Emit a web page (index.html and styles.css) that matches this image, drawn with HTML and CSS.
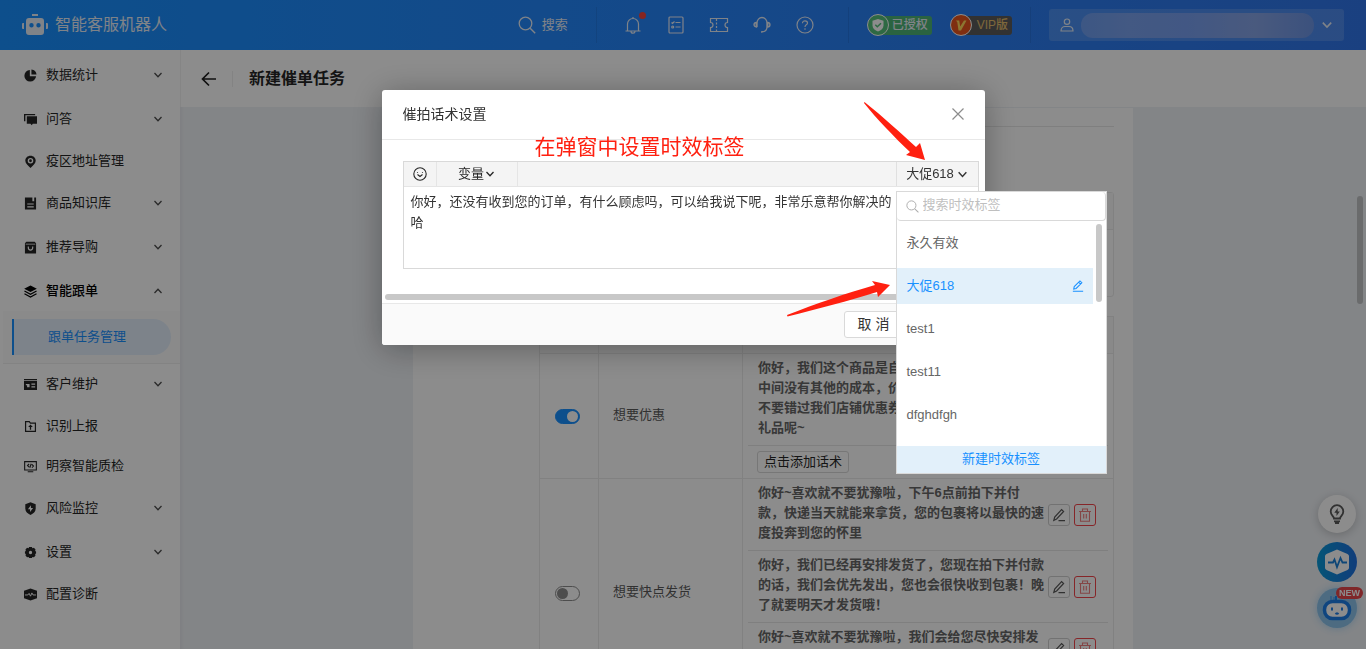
FILE: index.html
```html
<!DOCTYPE html>
<html lang="zh-CN">
<head>
<meta charset="utf-8">
<title>智能客服机器人</title>
<link rel="stylesheet" href="styles.css">
</head>
<body>
<svg class="sprite" aria-hidden="true">
  <symbol id="chevron" viewBox="0 0 10 10"><path d="M1.500 3l3.500 3.700L8.500 3" fill="none" stroke="currentColor" stroke-width="1.300"/></symbol>
  <symbol id="search" viewBox="0 0 18 18"><circle cx="7.500" cy="7.500" r="6.300" fill="none" stroke="currentColor" stroke-width="1.300"/><path d="M12.200 12.200l5 5" stroke="currentColor" stroke-width="1.400"/></symbol>
  <symbol id="pencil" viewBox="0 0 14 14"><path d="M2 10.500l.6-2.800L9.300 1l2.200 2.200-6.700 6.700zM7.800 2.600l2.200 2.200M1 13h12" fill="none" stroke="currentColor" stroke-width="1.200"/></symbol>
  <symbol id="pen" viewBox="0 0 14 14"><path d="M1.800 12.300l.9-3.300L9.600 1.600l2 1.900-7 7.500zM6.500 12.600H13" fill="none" stroke="currentColor" stroke-width="1.200"/></symbol>
  <symbol id="trash" viewBox="0 0 14 14"><path d="M1 3.500h12M4.500 3.500V1h5v2.500M2.500 3.500v9.700h9V3.500M5.700 6v4.500M8.300 6v4.500" fill="none" stroke="currentColor" stroke-width="1.100"/></symbol>
</svg>

<div class="app">
  <header class="topbar">
    <div class="brand">
      <svg width="26" height="22" viewBox="0 0 26 22" fill="currentColor"><path d="M10 0h6v2h-6zM1 9h1v6H1a1 1 0 0 1-1-1v-4a1 1 0 0 1 1-1zM24 9h1a1 1 0 0 1 1 1v4a1 1 0 0 1-1 1h-1z"/><path fill-rule="evenodd" d="M7 4h12a3 3 0 0 1 3 3v11a3 3 0 0 1-3 3H7a3 3 0 0 1-3-3V7a3 3 0 0 1 3-3zm2.500 5a2.200 2.200 0 1 0 0 4.400 2.200 2.200 0 0 0 0-4.400zm7 0a2.200 2.200 0 1 0 0 4.400 2.200 2.200 0 0 0 0-4.400z"/></svg>
      <span>智能客服机器人</span>
    </div>
    <button class="top-search"><svg width="18" height="18"><use href="#search"/></svg>搜索</button>
    <div class="top-icons">
      <button class="icon-btn" aria-label="通知"><svg width="18" height="18" viewBox="0 0 18 18" fill="none" stroke="currentColor" stroke-width="1.200"><path d="M1.500 15h15M3.500 15V8a5.500 5.500 0 0 1 11 0v7M9 2.500V1M7 15.500a2 1.700 0 0 0 4 0"/></svg><i class="dot"></i></button>
      <button class="icon-btn" aria-label="任务"><svg width="18" height="18" viewBox="0 0 18 18" fill="none" stroke="currentColor" stroke-width="1.200"><rect x="2" y="1" width="14" height="16" rx="1"/><path d="M4.500 6.500l1 1 2-2M8.500 6.500h5M8.500 11h5"/><circle cx="5.700" cy="11" r="1"/></svg></button>
      <button class="icon-btn" aria-label="卡券"><svg width="20" height="18" viewBox="0 0 20 18" fill="none" stroke="currentColor" stroke-width="1.200"><path d="M1.500 2.500h17v4a2.500 2.500 0 0 0 0 5v4h-17v-4a2.500 2.500 0 0 0 0-5z"/><path d="M7.500 3v12" stroke-dasharray="2 1.500"/></svg></button>
      <button class="icon-btn" aria-label="客服"><svg width="18" height="18" viewBox="0 0 18 18" fill="none" stroke="currentColor" stroke-width="1.300"><path d="M4 11V7a5 5.500 0 0 1 10 0v4c0 3-2 5-6 5"/><path d="M3.500 6.500v4.500C2 11 1 10 1 8.800s1-2.300 2.500-2.300zM14.500 6.500v4.500C16 11 17 10 17 8.800s-1-2.300-2.500-2.300z" fill="currentColor" fill-opacity=".4"/></svg></button>
      <button class="icon-btn" aria-label="帮助"><svg width="18" height="18" viewBox="0 0 18 18" fill="none" stroke="currentColor" stroke-width="1.200"><circle cx="9" cy="9" r="8"/><path d="M6.500 7.200c0-3.300 5-3 5-.2C11.500 9 9 8.700 9 11M9 12.300v1.400"/></svg></button>
    </div>
    <div class="badges">
      <span class="badge badge-auth"><i class="badge-icon"><svg width="14" height="14" viewBox="0 0 14 14"><path d="M7 1l5.500 1.800v4.700C12.500 10.500 10 12.500 7 13.500 4 12.500 1.500 10.500 1.500 7.500V2.800z" fill="#fff"/><path d="M4.300 6.800l2 2L10 5.200" fill="none" stroke="#55c07a" stroke-width="1.500"/></svg></i>已授权</span>
      <span class="badge badge-vip"><i class="badge-icon"><svg width="14" height="14" viewBox="0 0 14 14"><path d="M2 2.500h3.200l1 6L10 2.500h2.500L7 12.500H4.500L3.300 4.200z" fill="#ffd75a"/></svg></i>VIP版</span>
    </div>
    <button class="account" aria-label="账户"><svg width="14" height="14" viewBox="0 0 14 14" fill="none" stroke="currentColor" stroke-width="1.200"><circle cx="7" cy="3.700" r="2.700"/><path d="M1 13c0-3 2-4.500 4-4.500h4c2 0 4 1.500 4 4.500z"/></svg><span class="account-name"></span><svg width="12" height="12"><use href="#chevron"/></svg></button>
  </header>

  <div class="main">
    <nav class="sidebar">
      <a class="nav-item group" href="#"><svg viewBox="0 0 14 14"><path d="M6.300 1v6.700H13A6.300 6.300 0 1 1 6.300 1zM8 0.500A6.200 6.200 0 0 1 13.500 6H8z"/></svg>数据统计<svg class="chev"><use href="#chevron"/></svg></a>
      <a class="nav-item group" href="#"><svg viewBox="0 0 14 14"><path d="M0 1h12v1.500H1.500V9H0zM3 3.500h11v8H9.500l-1.200 1.700L7 11.500H3z"/></svg>问答<svg class="chev"><use href="#chevron"/></svg></a>
      <a class="nav-item" href="#"><svg viewBox="0 0 14 14"><path fill-rule="evenodd" d="M7 .8c3.300 0 5.600 2.400 5.600 5.400C12.600 9.200 9.500 11.500 7 14 4.500 11.500 1.400 9.200 1.400 6.200 1.400 3.200 3.700.8 7 .8zm0 2.400a3 3 0 1 0 0 6 3 3 0 0 0 0-6zm0 1.500a1.500 1.500 0 1 1 0 3 1.500 1.500 0 0 1 0-3z"/></svg>疫区地址管理</a>
      <a class="nav-item group" href="#"><svg viewBox="0 0 14 14"><path fill-rule="evenodd" d="M1 .5h8v4h2v-4h2v13H1zM3.500 7v1.200h7V7zm0 3v1.200h7V10z"/></svg>商品知识库<svg class="chev"><use href="#chevron"/></svg></a>
      <a class="nav-item group" href="#"><svg viewBox="0 0 14 14"><path fill-rule="evenodd" d="M2.500.7h9L13 2.500v11H1v-11zM1.800 3v.8h10.400V3zM4 6v1.300c0 4.300 6 4.300 6 0V6H8.700v1.300c0 2.400-3.400 2.400-3.400 0V6z"/></svg>推荐导购<svg class="chev"><use href="#chevron"/></svg></a>
      <a class="nav-item group open" href="#"><svg viewBox="0 0 14 14"><path d="M7 .5L13.800 4 7 7.500.2 4z"/><path d="M.5 6.500L7 10l6.500-3.500M.5 9.500L7 13l6.500-3.500" fill="none" stroke="currentColor" stroke-width="1.300"/></svg>智能跟单<svg class="chev"><use href="#chevron"/></svg></a>
      <div class="submenu"><a class="sub-item" href="#">跟单任务管理</a></div>
      <a class="nav-item group" href="#"><svg viewBox="0 0 14 14"><path fill-rule="evenodd" d="M0 1h14v1.200H0zM0 3h14v10H0zm2 3.500v1.200h1.300V10H6V6.500zM8 6v1.200h4V6zm0 3v1.200h4V9z"/></svg>客户维护<svg class="chev"><use href="#chevron"/></svg></a>
      <a class="nav-item" href="#"><svg viewBox="0 0 14 14" ><path d="M1.700 1.800h4l1.200 1.500h5.400v9H1.700z" fill="none" stroke="currentColor" stroke-width="1.300"/><path d="M7 4.800l2.500 2.700H7.700V10.500H6.300V7.500H4.500z"/></svg>识别上报</a>
      <a class="nav-item" href="#"><svg viewBox="0 0 14 14"><path d="M.7 1.700h12.600v9H.7zM4 12.700h6M5.500 4.300L3.800 6l1.700 1.700M8.500 8.200L10.200 6.500 8.500 4.700M7.800 4L6.200 8.300" fill="none" stroke="currentColor" stroke-width="1.200"/></svg>明察智能质检</a>
      <a class="nav-item group" href="#"><svg viewBox="0 0 14 14"><path fill-rule="evenodd" d="M7 .3l5.600 2V7c0 3.500-2.500 5.500-5.600 7-3.100-1.500-5.600-3.500-5.600-7V2.300zM7.500 3.500L4.200 7.700h2.300v3.100l3.300-4.300H7.500z"/></svg>风险监控<svg class="chev"><use href="#chevron"/></svg></a>
      <a class="nav-item group" href="#"><svg viewBox="0 0 14 14"><path fill-rule="evenodd" d="M5.500 1h3l.6 1.300 1.600-.4 1.700 2-.4 1.500L13 6v2l-1 .7.4 1.500-1.700 2-1.600-.4L8.500 13h-3l-.6-1.200-1.600.4-1.700-2L2 8.700 1 8V6l1-.6-.4-1.500 1.700-2 1.600.4zM7 5.200a1.800 1.800 0 1 0 0 3.600 1.800 1.800 0 0 0 0-3.600z"/></svg>设置<svg class="chev"><use href="#chevron"/></svg></a>
      <a class="nav-item" href="#"><svg viewBox="0 0 14 14"><path d="M7 0.500L14 3v8L7 13.500 0 11V3z"/><path d="M1 7.500h3.200L5.500 5.800 7 8.800l1.500-3.500 1.200 2.200H13" fill="none" stroke="#fff" stroke-width="1"/></svg>配置诊断</a>
    </nav>

    <main class="content">
      <div class="page-head">
        <button class="back" aria-label="返回"><svg width="16" height="16" viewBox="0 0 16 16" fill="none" stroke="currentColor" stroke-width="1.700"><path d="M8 1.500L1.500 8 8 14.500M1.500 8H15"/></svg></button>
        <h1>新建催单任务</h1>
      </div>
      <div class="sheet">
        <div class="section-line"></div>
        <div class="card-box"><div class="card-head"></div></div>
        <table class="rules">
          <thead><tr><th class="c-switch"></th><th class="c-name"></th><th></th></tr></thead>
          <tbody>
            <tr>
              <td class="c-switch"><input id="sw1" class="switch" type="checkbox" checked></td>
              <td class="c-name"><label for="sw1">想要优惠</label></td>
              <td class="c-talk">
                <div class="talk"><p>你好，我们这个商品是自<br>中间没有其他的成本，价<br>不要错过我们店铺优惠券<br>礼品呢~</p></div>
                <div class="talk-add"><button class="add-btn">点击添加话术</button></div>
              </td>
            </tr>
            <tr>
              <td class="c-switch"><input id="sw2" class="switch" type="checkbox"></td>
              <td class="c-name"><label for="sw2">想要快点发货</label></td>
              <td class="c-talk">
                <div class="talk"><p>你好~喜欢就不要犹豫啦，下午6点前拍下并付<br>款，快递当天就能来拿货，您的包裹将以最快的速<br>度投奔到您的怀里</p>
                  <div class="acts"><button class="act" aria-label="编辑"><svg width="14" height="14"><use href="#pen"/></svg></button><button class="act act-del" aria-label="删除"><svg width="14" height="14"><use href="#trash"/></svg></button></div></div>
                <div class="talk"><p>你好，我们已经再安排发货了，您现在拍下并付款<br>的话，我们会优先发出，您也会很快收到包裹！晚<br>了就要明天才发货哦！</p>
                  <div class="acts"><button class="act" aria-label="编辑"><svg width="14" height="14"><use href="#pen"/></svg></button><button class="act act-del" aria-label="删除"><svg width="14" height="14"><use href="#trash"/></svg></button></div></div>
                <div class="talk talk-short"><p>你好~喜欢就不要犹豫啦，我们会给您尽快安排发</p>
                  <div class="acts"><button class="act" aria-label="编辑"><svg width="14" height="14"><use href="#pen"/></svg></button><button class="act act-del" aria-label="删除"><svg width="14" height="14"><use href="#trash"/></svg></button></div></div>
                <div class="talk-add"></div>
              </td>
            </tr>
          </tbody>
        </table>
      </div>
      <div class="page-thumb"></div>
    </main>
  </div>

  <div class="floats">
    <button class="float float-tip" aria-label="提示"><svg width="18" height="20" viewBox="0 0 18 20"><path d="M6 14.500c0-2-3.300-3.200-3.300-7a6.300 6.300 0 0 1 12.600 0c0 3.800-3.300 5-3.300 7zM6 17.300h6M7 19h4" fill="none" stroke="#595959" stroke-width="1.800"/><path d="M9.700 4L6.300 8.700h2.200V12l3.300-4.500H9.700z" fill="#595959"/></svg></button>
    <button class="float float-diag" aria-label="诊断"><svg width="26" height="26" viewBox="0 0 26 26"><path d="M13 .5L23.500 5q1.500.8 1.500 2v12q0 1.200-1.500 2L13 25.500 2.500 21Q1 20.200 1 19V7q0-1.200 1.500-2z" fill="#fff"/><path d="M4 13.500h5l1.500-3L13 18l3.500-9 2 4.500H23" fill="none" stroke="#1a80d8" stroke-width="1.800"/></svg></button>
    <button class="float float-bot" aria-label="机器人"><svg width="30" height="28" viewBox="0 0 30 28"><path d="M14 6V2" stroke="#1d86ee" stroke-width="2"/><path d="M9 2v5M12 3v3" stroke="#4fa3f2" stroke-width="1.500"/><rect x="2.500" y="7.500" width="25" height="17" rx="8" fill="#fff" stroke="#1d7ee8" stroke-width="3.500"/><path d="M10 13.500v3M20 13.500v3M13.500 19q1.500 1.500 3 0" stroke="#1d7ee8" stroke-width="2" fill="none"/></svg><span class="new">NEW</span></button>
  </div>
</div>

<div class="mask">
  <section class="dialog" role="dialog" aria-labelledby="dlg-title">
    <div class="dialog-head"><h2 id="dlg-title">催拍话术设置</h2><button class="close" aria-label="关闭"><svg width="12" height="12" viewBox="0 0 12 12" stroke="currentColor" stroke-width="1.200"><path d="M.5.5l11 11M11.500.5l-11 11"/></svg></button></div>
    <div class="dialog-body">
      <div class="editor">
        <div class="toolbar">
          <button class="tool tool-face" aria-label="表情"><svg width="14" height="14" viewBox="0 0 14 14" fill="none" stroke="currentColor" stroke-width="1.100"><circle cx="7" cy="7" r="6.200"/><path d="M4.500 7.500l2.500 2 2.500-2M4.500 5v.8M9.500 5v.8"/></svg></button>
          <button class="tool tool-var">变量<svg width="10" height="10"><use href="#chevron"/></svg></button>
          <div class="tag-picker">
            <button class="tool tool-tag">大促618<svg width="11" height="11"><use href="#chevron"/></svg></button>
            <div class="dropdown">
              <label class="tag-search"><svg width="13" height="13"><use href="#search"/></svg><input type="text" placeholder="搜索时效标签" aria-label="搜索时效标签"></label>
              <ul class="tags">
                <li>永久有效</li>
                <li class="on">大促618<button class="tag-edit" aria-label="编辑标签"><svg width="12" height="12"><use href="#pencil"/></svg></button></li>
                <li>test1</li>
                <li>test11</li>
                <li>dfghdfgh</li>
              </ul>
              <div class="tags-thumb"></div>
              <button class="tag-new">新建时效标签</button>
            </div>
          </div>
        </div>
        <textarea class="message" aria-label="话术内容">你好，还没有收到您的订单，有什么顾虑吗，可以给我说下呢，非常乐意帮你解决的
哈</textarea>
      </div>
    </div>
    <div class="body-thumb"></div>
    <div class="dialog-foot"><button class="cancel">取 消</button></div>
    <p class="note">在弹窗中设置时效标签</p>
    <svg class="arrow arrow-top" width="62" height="60" viewBox="0 0 62 60"><path d="M.5 0C18 14 38 32 52 45l4-4 5 17-19-5 4-3C30 35 12 16 0 1z"/></svg>
    <svg class="arrow arrow-low" width="104" height="36" viewBox="0 0 104 36"><path d="M0 34C28 23 60 12 88 4l-3-4 18 4-12 12-1-5C62 20 30 28 .5 35.500z"/></svg>
  </section>
</div>
</body>
</html>
```
FILE: styles.css
```css
* { box-sizing: border-box; }
body {
  margin: 0;
  overflow: hidden;
  font: 13px/20px "Liberation Sans", "Noto Sans CJK SC", sans-serif;
  color: #595959;
}
button { font: inherit; color: inherit; padding: 0; border: 0; background: none; display: flex; align-items: center; justify-content: center; }
a { color: inherit; text-decoration: none; }
h1, h2, p, ul { margin: 0; padding: 0; font-weight: normal; }
ul { list-style: none; }
i { font-style: normal; }
svg { flex: none; display: block; }
.sprite { position: absolute; width: 0; height: 0; }

.app { height: 100vh; display: flex; flex-direction: column; }

/* top bar */
.topbar {
  flex: none;
  height: 50px;
  padding: 0 22px;
  display: flex;
  align-items: center;
  color: #e8eef8;
  background: linear-gradient(90deg, #1890ff, #2685fa 50%, #3176ea);
}
.brand { display: flex; align-items: center; gap: 7px; font-size: 16px; margin-right: auto; }
.top-search { gap: 6px; }
.top-icons { display: flex; gap: 23px; margin-left: 28px; padding: 0 33px 0 26px; height: 36px; border: solid rgba(0, 0, 0, .08); border-width: 0 1px; }
.icon-btn { width: 20px; position: relative; }
.dot { position: absolute; top: 5px; right: -3px; width: 7px; height: 7px; border-radius: 50%; background: #f5443c; }
.badges { display: flex; align-items: center; gap: 18px; height: 36px; padding: 0 18px; border-right: 1px solid rgba(0, 0, 0, .08); }
.badge { display: flex; align-items: center; gap: 3px; height: 19px; padding-right: 4px; border-radius: 3px; font-size: 12px; font-weight: 500; }
.badge-icon { width: 22px; height: 22px; border: 1px solid #fff; border-radius: 50%; display: flex; align-items: center; justify-content: center; }
.badge-auth { background: linear-gradient(90deg, transparent 10px, #4db577 10px); }
.badge-auth .badge-icon { background: #55c07a; }
.badge-vip { gap: 5px; color: #e3bd6c; background: linear-gradient(90deg, transparent 10px, #5c5c5c 10px); }
.badge-vip .badge-icon { background: #e8541e; }
.account { width: 295px; height: 32px; margin-left: 18px; padding: 0 11px; gap: 7px; border-radius: 3px; background: rgba(255, 255, 255, .15); }
.account-name { flex: 1; height: 25px; border-radius: 12px; background: linear-gradient(90deg, #6f9ef0, #7aa2ee 20%, #789ff0 45%, #86a4e6 75%, #6c94e4); }

/* side navigation */
.main { flex: 1; min-height: 0; display: flex; }
.sidebar { flex: none; width: 180px; padding-top: 3px; background: #fff; color: #262626; }
.nav-item { display: flex; align-items: center; gap: 9px; height: 40px; padding: 0 17px 0 24px; }
.nav-item.group { height: 44px; }
.nav-item svg { width: 13px; height: 13px; fill: currentColor; }
.nav-item .chev { width: 10px; height: 10px; margin-left: auto; color: #4d4d4d; }
.open { color: #000; font-weight: 500; }
.open .chev { transform: rotate(180deg); }
.submenu { height: 53px; margin: -2px 0 -2px 3px; padding: 8px 9px; background: #fbfbfb; border-bottom: 1px solid #efefef; }
.sub-item { display: flex; align-items: center; height: 36px; padding-left: 34px; border-left: 2px solid #1890ff; border-radius: 0 18px 18px 0; color: #1890ff; background: #e3effc; }

/* page */
.content { flex: 1; min-width: 0; position: relative; overflow: hidden; background: #eff2f6; box-shadow: inset 4px 0 4px -3px rgba(0, 0, 0, .06); }
.page-head { height: 57px; padding: 0 20px; display: flex; align-items: center; background: #fff; border-left: 1px solid #f3f3f3; color: #1f1f1f; }
.back { height: 16px; }
.back svg { margin-right: 15px; }
.page-head h1 { padding-left: 16px; border-left: 1px solid #eee; font-size: 16px; line-height: 16px; font-weight: 700; color: #262626; }
.sheet { max-width: 720px; margin: 1px auto 0; padding: 18px 19px 0 126px; background: #fff; }
.section-line { height: 1px; background: #e8e8e8; }
.card-box { height: 105px; margin: 65px 0 19px; border: 1px solid #ebebeb; border-radius: 3px; }
.card-head { height: 37px; background: #fafafa; border-bottom: 1px solid #ebebeb; }
.rules { width: 100%; border-collapse: separate; border-spacing: 0; table-layout: fixed; border: solid #ebebeb; border-width: 1px 1px 0; }
.rules th { height: 37px; padding: 0; background: #fafafa; border: solid #ebebeb; border-width: 0 1px 1px 0; }
.rules td { padding: 0; border: solid #ebebeb; border-width: 0 1px 1px 0; }
.rules th:last-child, .rules td:last-child { border-right: 0; }
.rules .c-switch { width: 59px; padding-left: 15px; }
.rules .c-name { width: 144px; padding: 0 0 2px 14px; }
.rules .c-talk { padding: 0 5px; }
.talk { display: flex; align-items: center; gap: 10px; padding: 4px 12px 7px 10px; border-bottom: 1px solid #e8e8e8; }
.talk p { flex: 1; white-space: nowrap; font-weight: 700; color: #666; }
.talk-short { min-height: 52px; }
.talk-short p { align-self: flex-start; }
.talk-add { height: 32px; padding: 5px 9px; }
.add-btn { height: 22px; padding: 0 6px; border: 1px solid #d9d9d9; border-radius: 3px; color: #262626; }
.acts { display: flex; gap: 4px; margin: 3px 0 0 -20px; }
.act { width: 22px; height: 22px; border: 1px solid #d0d0d0; border-radius: 3px; background: #fff; }
.act-del { color: #f08080; border-color: #f5454b; }
.switch { appearance: none; display: block; width: 25px; height: 15px; margin: 0; padding: 1px; border: 1px solid #8c8c8c; border-radius: 8px; background: #fff; }
.switch::before { content: ""; display: block; width: 11px; height: 11px; border-radius: 50%; background: #8c8c8c; }
.switch:checked { border-color: #1890ff; background: #1890ff; }
.switch:checked::before { margin-left: auto; background: #fff; }
.page-thumb { position: absolute; right: 3px; top: 146px; width: 6px; height: 108px; border-radius: 3px; background: #c1c3c5; }

/* floating helpers */
.floats { position: fixed; right: 9px; bottom: 21px; display: flex; flex-direction: column; align-items: center; gap: 6px; }
.float { position: relative; width: 40px; height: 40px; border-radius: 50%; }
.float-tip { width: 38px; height: 38px; margin-bottom: 3px; background: #fff; box-shadow: 0 2px 10px rgba(0, 0, 0, .2); }
.float-diag { background: linear-gradient(90deg, #0a9bd8, #1f6fe0); }
.float-bot { background: #8cc4ec; box-shadow: 0 0 8px #a8d4f4; }
.new { position: absolute; left: 19px; top: -1px; padding: 0 3px; border-radius: 6px; background: #e8474c; color: #fff; font-size: 9px; line-height: 12px; font-weight: 700; }

/* dialog */
.mask { position: fixed; inset: 0; display: flex; align-items: flex-start; justify-content: center; padding-top: 90px; background: rgba(0, 0, 0, .45); }
.dialog { position: relative; width: 603px; max-width: 100%; border-radius: 3px; background: #fff; box-shadow: 0 4px 32px rgba(0, 0, 0, .32); }
.dialog-head { display: flex; align-items: center; justify-content: space-between; height: 50px; padding: 0 21px 2px; border-bottom: 1px solid #e8e8e8; color: #333; }
.dialog-head h2 { font-size: 14px; }
.close { color: #8c8c8c; }
.dialog-body { padding: 21px 6px 25px 21px; }
.editor { border: 1px solid #d9d9d9; }
.toolbar { display: flex; height: 25px; background: #f4f4f4; border-bottom: 1px solid #e5e5e5; color: #262626; }
.tool { height: 24px; gap: 1px; }
.tool-face { width: 33px; border-right: 1px solid #e5e5e5; }
.tool-var { width: 81px; border-right: 1px solid #e5e5e5; }
.tag-picker { position: relative; margin-left: auto; }
.tool-tag { width: 82px; gap: 3px; border-left: 1px solid #e0e0e0; color: #333; }
.message { display: block; width: 100%; height: 81px; padding: 4px 7px; border: 0; resize: none; outline: 0; overflow: hidden; font: inherit; line-height: 21px; color: #333; }
.body-thumb { width: 588px; height: 6px; margin: 0 3px 3px; border-radius: 3px; background: #c8c8c8; }
.dialog-foot { display: flex; justify-content: flex-end; height: 42px; padding: 7px 81px 0; border-top: 1px solid #e8e8e8; border-radius: 0 0 3px 3px; background: #fafafa; color: #333; }
.cancel { height: 27px; padding: 0 13px 2px; border: 1px solid #d9d9d9; border-radius: 3px; background: #fff; font-size: 14px; }

/* label dropdown */
.dropdown { position: absolute; z-index: 1; left: 0; top: 29px; width: 211px; border: 1px solid #d9d9d9; background: #fff; }
.tag-search { display: flex; align-items: center; gap: 4px; height: 29px; padding: 0 9px; border: 1px solid #d9d9d9; border-top-width: 0; border-left-width: 0; border-radius: 4px; color: #aaa; }
.tag-search input { flex: 1; min-width: 0; padding: 0 0 2px; border: 0; outline: 0; background: none; font: inherit; line-height: 20px; }
.tag-search input::placeholder { color: #bfbfbf; }
.tags { display: flex; flex-direction: column; gap: 7px; padding: 4px 13px 13px 0; color: #666; }
.tags li { display: flex; align-items: center; justify-content: space-between; height: 36px; padding: 0 9px 0 10px; }
.tags .on { background: #e2f0fa; color: #1890ff; }
.tags-thumb { position: absolute; right: 4px; top: 32px; width: 6px; height: 78px; border-radius: 3px; background: #c8c8c8; }
.tag-new { width: 100%; height: 27px; padding-bottom: 2px; background: #e2f0fa; color: #1890ff; }

/* annotations over the dialog */
.note { position: absolute; left: 153px; top: 43px; font-size: 21px; line-height: 28px; color: #ff2010; white-space: nowrap; }
.arrow { position: absolute; z-index: 2; fill: #ff2010; }
.arrow-top { left: 482px; top: 12px; }
.arrow-low { left: 405px; top: 191px; }
```
